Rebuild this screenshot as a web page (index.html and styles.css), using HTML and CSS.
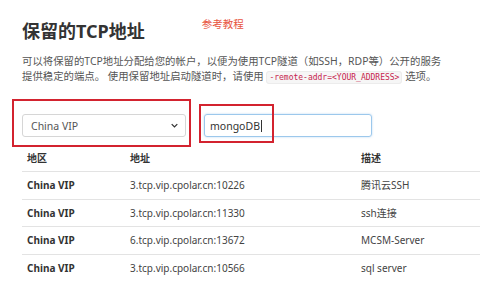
FILE: index.html
```html
<!DOCTYPE html>
<html lang="zh-CN">
<head>
  <meta charset="UTF-8" />
  <meta name="viewport" content="width=device-width, initial-scale=1.0"/>
  <title>保留的TCP地址</title>
  <link rel="stylesheet" href="styles.css">
</head>
<body>
  <div class="page">
    <div class="heading">
      <h2>保留的TCP地址</h2>
      <a href="#" class="tutorial">参考教程</a>
    </div>

    <p class="intro">
      可以将保留的TCP地址分配给您的帐户，以便为使用TCP隧道（如SSH，RDP等）公开的服务<br>
      提供稳定的端点。 使用保留地址启动隧道时，请使用 <code>-remote-addr=&lt;YOUR_ADDRESS&gt;</code> 选项。
    </p>

    <div class="controls">
      <div class="select">
        <span>China VIP</span>
        <svg class="chevron" viewBox="0 0 10 6"><path d="M1 1l4 4 4-4" fill="none" stroke="#333" stroke-width="1.8"/></svg>
      </div>
      <div class="search">mongoDB<span class="caret"></span></div>
    </div>

    <table class="tunnels">
      <thead>
        <tr><th class="col-area">地区</th><th class="col-addr">地址</th><th>描述</th></tr>
      </thead>
      <tbody>
        <tr><td class="area">China VIP</td><td>3.tcp.vip.cpolar.cn:10226</td><td>腾讯云SSH</td></tr>
        <tr><td class="area">China VIP</td><td>3.tcp.vip.cpolar.cn:11330</td><td>ssh连接</td></tr>
        <tr><td class="area">China VIP</td><td>6.tcp.vip.cpolar.cn:13672</td><td>MCSM-Server</td></tr>
        <tr><td class="area">China VIP</td><td>3.tcp.vip.cpolar.cn:10566</td><td>sql server</td></tr>
      </tbody>
    </table>

    <!-- annotation boxes from the screenshot -->
    <div class="mark mark-region"></div>
    <div class="mark mark-search"></div>
  </div>
</body>
</html>
```

FILE: styles.css
```css
body {
  margin: 0;
  padding: 0;
  background: #fff;
  color: #333;
  font-family: "Noto Sans", "Noto Sans CJK SC", sans-serif;
}

.page {
  position: relative;
  padding: 18px 0 0 22px;
  height: 282px;
  overflow: hidden;
}

.heading {
  display: flex;
  align-items: flex-start;
  gap: 57px;
}

h2 {
  margin: 0;
  font-size: 18px;
  line-height: 26px;
  font-weight: 700;
  color: #333;
}

.tutorial {
  margin-top: -2px;
  font-size: 10.5px;
  color: #e8553e;
  text-decoration: none;
}

.intro {
  margin: 10px 0 0;
  font-size: 10.4px;
  line-height: 15px;
  color: #555;
  white-space: nowrap;
}

code {
  font-family: "DejaVu Sans Mono", monospace;
  font-size: 8px;
  color: #c7254e;
  background: #f6f6f6;
  border: 1px solid #ececec;
  border-radius: 3px;
  padding: 1px 2px;
}

.controls {
  display: flex;
  gap: 18px;
  margin-top: 29px;
}

.select {
  width: 164px;
  height: 23px;
  box-sizing: border-box;
  border: 1px solid #d6d6d6;
  border-radius: 3px;
  padding: 0 7px 0 8px;
  display: flex;
  align-items: center;
  justify-content: space-between;
  font-size: 10.5px;
  color: #555;
}

.chevron {
  width: 7px;
  height: 5px;
}

.search {
  width: 168px;
  height: 23px;
  box-sizing: border-box;
  border: 1px solid #9cc8ec;
  border-radius: 3px;
  box-shadow: 0 0 2px rgba(100, 170, 230, 0.5);
  padding: 0 5px;
  display: flex;
  align-items: center;
  font-size: 10.5px;
  color: #333;
}

.caret {
  display: inline-block;
  width: 1px;
  height: 12px;
  background: #333;
  margin-left: 1px;
}

.tunnels {
  margin-top: 8px;
  width: 480px;
  border-collapse: collapse;
  font-size: 10px;
}

.tunnels th {
  text-align: left;
  font-weight: 700;
  padding: 6px 5px;
  line-height: 14px;
  color: #333;
}

.tunnels td {
  border-top: 1px solid #e3e3e3;
  padding: 7px 5px;
  line-height: 12.5px;
  color: #444;
}

.col-area {
  width: 93px;
}

.col-addr {
  width: 221px;
}

.tunnels td.area {
  font-weight: 700;
  color: #333;
}

.mark {
  position: absolute;
  border: 2px solid #d3232f;
  box-sizing: border-box;
}

.mark-region {
  left: 12px;
  top: 99px;
  width: 179px;
  height: 48px;
}

.mark-search {
  left: 199px;
  top: 104px;
  width: 75px;
  height: 39px;
}
```
